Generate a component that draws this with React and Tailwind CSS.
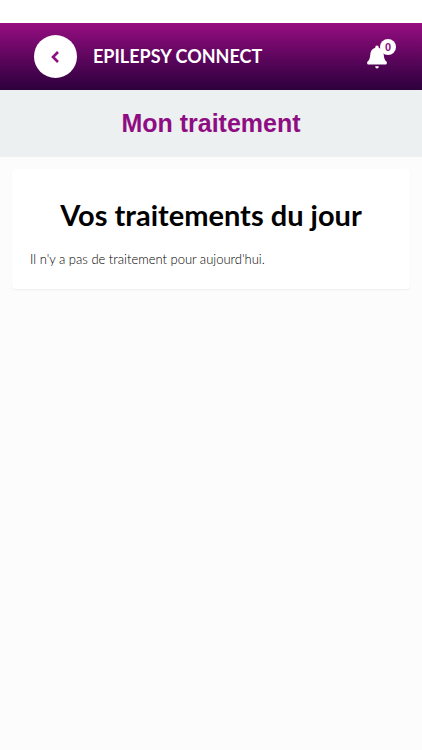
export default function App() {
  return (
    <div className="min-h-screen bg-[#fcfcfc] pt-[23px] font-['Lato',sans-serif] text-black [background-image:linear-gradient(#fff_23px,transparent_23px)]">
      <header className="flex h-[67px] items-center bg-linear-to-b from-[#970d82] to-[#2d003c] pr-[26px] pl-[34px]">
        <button type="button" aria-label="Retour" className="flex size-[43px] items-center justify-center rounded-full bg-white">
          <svg viewBox="0 0 12 14" className="h-[14px] w-[12px]" fill="none" stroke="#8c1080" strokeWidth="2.6">
            <path d="M8 2 3 7l5 5" />
          </svg>
        </button>
        <span className="ml-4 text-[18px] font-bold text-white">EPILEPSY CONNECT</span>
        <button type="button" aria-label="Notifications" className="relative ml-auto h-9 w-[30px]">
          <svg viewBox="0 0 20 24" className="absolute bottom-[6px] left-px h-6 w-5" fill="#fff">
            <path d="M10 0.5c-1 0-1.7.8-1.7 1.8v.5C5.200 3.600 3.600 6 3.300 9.200 3 13 2.600 14.500.6 16.600c-.9 1-.5 2.900.9 2.900h17c1.400 0 1.800-1.900.9-2.900-2-2.100-2.400-3.600-2.700-7.400-.3-3.200-1.900-5.600-5-6.400v-.5c0-1-.7-1.800-1.700-1.800z" />
            <path d="M8.200 21.200h3.600c0 1.300-.8 2.200-1.800 2.200s-1.800-.9-1.800-2.200z" />
          </svg>
          <span className="absolute top-0 right-0 flex size-4 items-center justify-center rounded-full bg-white font-['Liberation_Sans',Arial,sans-serif] text-[11px] leading-4 font-bold text-[#8c1080]">0</span>
        </button>
      </header>
      <div className="flex h-[67px] items-center justify-center bg-[#ecf0f1]">
        <h1 className="font-['Liberation_Sans',Arial,sans-serif] text-[25px] font-bold text-[#8f0d82]">Mon traitement</h1>
      </div>
      <main className="p-3">
        <section className="rounded bg-white px-[18px] pt-7 pb-5 shadow-[0_1px_2px_rgba(0,0,0,0.06)]">
          <h2 className="text-center text-[29px] leading-9 font-bold">Vos traitements du jour</h2>
          <p className="mt-4 text-[13px] leading-5 font-light">Il n'y a pas de traitement pour aujourd'hui.</p>
        </section>
      </main>
    </div>
  );
}
